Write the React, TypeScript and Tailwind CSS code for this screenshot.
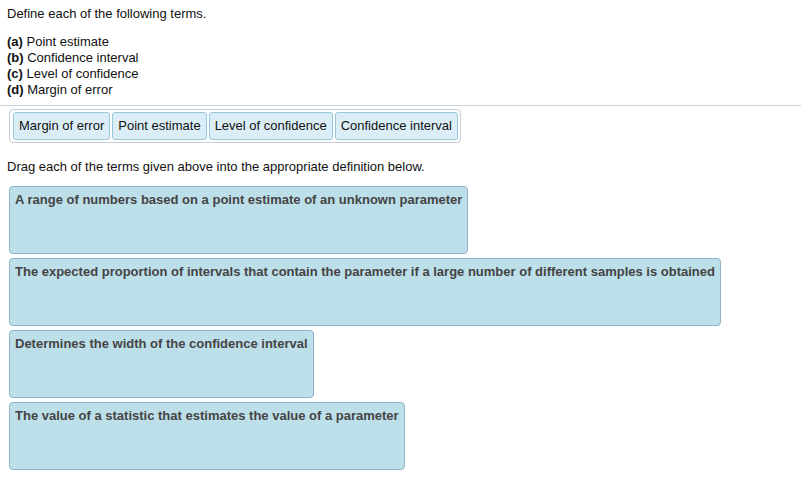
import React from "react";

const chips = ["Margin of error", "Point estimate", "Level of confidence", "Confidence interval"];
const boxes = [
  { t: "A range of numbers based on a point estimate of an unknown parameter", w: "w-[459px]" },
  { t: "The expected proportion of intervals that contain the parameter if a large number of different samples is obtained", w: "w-[712px]" },
  { t: "Determines the width of the confidence interval", w: "w-[305px]" },
  { t: "The value of a statistic that estimates the value of a parameter", w: "w-[396px]" },
];

export default function App() {
  return (
    <div className="w-[801px] h-[495px] bg-white text-[13px] leading-[16px] text-[#111] font-['Liberation_Sans',Arial,sans-serif]">
      <div className="pl-[7px] pt-[6px]">
        <div>Define each of the following terms.</div>
        <div className="mt-[12px]">
          <div><span className="font-bold">(a)</span> Point estimate</div>
          <div><span className="font-bold">(b)</span> Confidence interval</div>
          <div><span className="font-bold">(c)</span> Level of confidence</div>
          <div><span className="font-bold">(d)</span> Margin of error</div>
        </div>
      </div>
      <div className="mt-[7px] h-px bg-[#c9d3dc]" />
      <div className="ml-[9px] mt-[3px] inline-flex gap-[2px] border border-[#c4ccd4] rounded-[4px] p-[2px] pl-[3px]">
        {chips.map((c) => (
          <div key={c} className="h-[28px] flex items-center px-[5px] bg-[#dbeef7] border border-[#98c6da] rounded-[3px] text-[#111]">
            {c}
          </div>
        ))}
      </div>
      <div className="pl-[7px] mt-[16px]">Drag each of the terms given above into the appropriate definition below.</div>
      <div className="pl-[9px] mt-[11px] flex flex-col gap-[4px]">
        {boxes.map((b) => (
          <div key={b.t} className={`${b.w} h-[68px] bg-[#bddfe9] border border-[#8fb3c6] rounded-[4px] px-[5px] pt-[5px] font-bold text-[#444] whitespace-nowrap overflow-hidden`}>
            {b.t}
          </div>
        ))}
      </div>
    </div>
  );
}
